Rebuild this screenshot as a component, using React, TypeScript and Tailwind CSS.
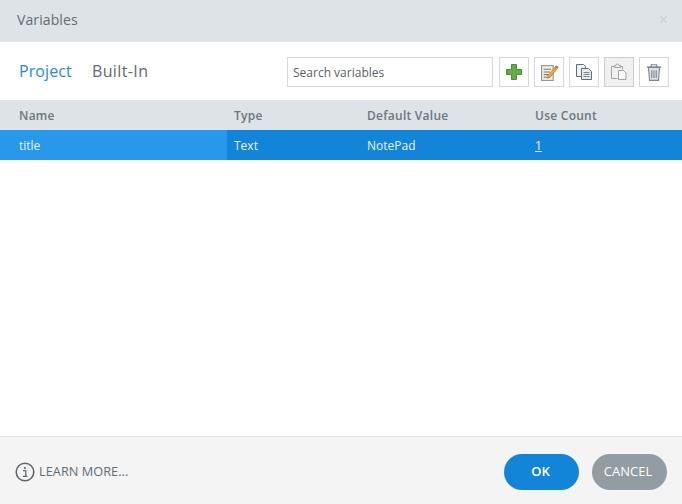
import React from "react";
import { X } from "lucide-react";

const font = "font-['Open_Sans','Noto_Sans',sans-serif]";

function ToolButton({ active, children }: { active?: boolean; children: React.ReactNode }) {
  return (
    <div
      className={
        "flex h-[30px] w-[30px] items-center justify-center border " +
        (active ? "border-[#c8cbcd] bg-[#f0f0f0]" : "border-[#d5d8da] bg-white")
      }
    >
      {children}
    </div>
  );
}

function PlusIcon() {
  return (
    <svg width="18" height="18" viewBox="0 0 18 18">
      <path d="M6.500 1.500h5v5h5v5h-5v5h-5v-5h-5v-5h5z" fill="#62ad45" stroke="#4c8a3c" strokeWidth="1" />
    </svg>
  );
}

function EditIcon() {
  return (
    <svg width="19" height="19" viewBox="0 0 18 18">
      <rect x="1.500" y="2.500" width="11" height="14" fill="#f3efe2" stroke="#8d8f90" />
      <path d="M3.500 6h7M3.500 8.500h6M3.500 11h5M3.500 13.500h6" stroke="#77797b" strokeWidth="1" />
      <path d="M7.500 12l7-8.500 2 1.700-7 8.500-2.500.8z" fill="#e9a93c" stroke="#a8772a" strokeWidth="0.600" />
      <path d="M14.500 3.500l1-1.200 2 1.700-1 1.200z" fill="#d5474f" />
    </svg>
  );
}

function CopyIcon() {
  return (
    <svg width="18" height="18" viewBox="0 0 18 18">
      <path d="M1.500 1.500h7l2 2v10h-9z" fill="#eef1f3" stroke="#5f6b75" />
      <path d="M6.500 5.500h7l3 3v8h-10z" fill="#e6eaed" stroke="#5f6b75" />
      <path d="M8.500 9.500h6M8.500 11.500h6M8.500 13.500h6" stroke="#7d8891" strokeWidth="1" />
    </svg>
  );
}

function PasteIcon() {
  return (
    <svg width="18" height="18" viewBox="0 0 18 18" fill="none">
      <path d="M4.500 3.500h-3v12h6" stroke="#a0a4a7" />
      <path d="M4.500 4.500v-2h1.500a1.500 1.500 0 0 1 3 0h1.500v2z" fill="#f0f0f0" stroke="#a0a4a7" />
      <path d="M11 3.500h1.500v3" stroke="#a0a4a7" />
      <path d="M8.500 7.500h5l2.500 2.500v6.500h-7.500z" fill="#f8f8f8" stroke="#a0a4a7" />
    </svg>
  );
}

function TrashIcon() {
  return (
    <svg width="20" height="20" viewBox="0 0 18 18" fill="none">
      <path d="M2.500 4.500h13" stroke="#7b8790" strokeWidth="1.200" />
      <path d="M6.500 4.500v-2h5v2" stroke="#7b8790" />
      <path d="M4 5h10l-1 11.500h-8z" fill="#d8e3ea" stroke="#7b8790" />
      <path d="M7 7.500v7M9 7.500v7M11 7.500v7" stroke="#7b8790" />
    </svg>
  );
}

export default function App() {
  return (
    <div className={`flex h-[504px] w-[682px] flex-col overflow-hidden bg-white text-[#5f6a72] ${font}`}>
      {/* Title bar */}
      <div className="flex h-[42px] items-center justify-between bg-[#dee3e7] pb-[3px] pl-[17px] pr-[13px]">
        <span className="text-[14px] tracking-[0.1px] text-[#626c74]">Variables</span>
        <X className="h-[11px] w-[11px] text-[#ccd0d3]" strokeWidth={3} />
      </div>

      {/* Tabs + toolbar */}
      <div className="flex h-[58px] items-center justify-between pl-[19px] pr-[13px]">
        <div className="flex items-center gap-[20px] text-[16px]">
          <span className="tracking-[0.1px] text-[#2a8bd2]">Project</span>
          <span className="tracking-[0.4px] text-[#5f6a72]">Built-In</span>
        </div>
        <div className="flex items-center gap-[5px] pt-[2px]">
          <div className="mr-[1px] flex h-[30px] w-[206px] items-center border border-[#d5d8da] px-[5px] pt-[1px] text-[12px] text-[#5b5f63]">
            Search variables
          </div>
          <ToolButton><PlusIcon /></ToolButton>
          <ToolButton><EditIcon /></ToolButton>
          <ToolButton><CopyIcon /></ToolButton>
          <ToolButton active><PasteIcon /></ToolButton>
          <ToolButton><TrashIcon /></ToolButton>
        </div>
      </div>

      {/* Table */}
      <div className="grid h-[30px] grid-cols-[227px_133px_168px_1fr] items-center bg-[#dee3e7] pt-[1px] text-[12px] font-semibold tracking-[0.25px] text-[#6c767e]">
        <div className="pl-[19px]">Name</div>
        <div className="pl-[7px]">Type</div>
        <div className="pl-[7px]">Default Value</div>
        <div className="pl-[7px]">Use Count</div>
      </div>
      <div className="grid h-[30px] grid-cols-[227px_133px_168px_1fr] items-center bg-[#1285d8] text-[12px] text-[#eaf4fb]">
        <div className="flex h-full items-center bg-[#2898ea] pl-[19px] pt-[1px]">title</div>
        <div className="pl-[7px] pt-[1px]">Text</div>
        <div className="pl-[7px] pt-[1px]">NotePad</div>
        <div className="pl-[7px] pt-[1px] underline">1</div>
      </div>
      <div className="flex-1" />

      {/* Footer */}
      <div className="flex h-[68px] items-center justify-between border-t border-[#e3e4e5] bg-[#f4f4f4] pl-[15px] pr-[15px] pt-[2px]">
        <div className="flex items-center gap-[4px] text-[12.8px] text-[#626c74]">
          <svg width="20" height="20" viewBox="0 0 20 20" fill="none">
            <circle cx="10" cy="10" r="8.800" stroke="#5d6a72" strokeWidth="1.600" />
            <circle cx="10" cy="6" r="1.100" fill="#5d6a72" />
            <path d="M8 8.700h2.800v5.300M7.800 14.300h4.600" stroke="#5d6a72" strokeWidth="1.300" />
          </svg>
          <span className="pt-[1px]">LEARN MORE...</span>
        </div>
        <div className="flex items-center gap-[13px] text-[13px] text-white">
          <div className="flex h-[36px] w-[75px] items-center justify-center rounded-full bg-[#1285d8] pr-[2px] pt-[1px] font-semibold">OK</div>
          <div className="flex h-[36px] w-[75px] items-center justify-center rounded-full bg-[#939ca3] pr-[3px] pt-[1px]">CANCEL</div>
        </div>
      </div>
    </div>
  );
}
